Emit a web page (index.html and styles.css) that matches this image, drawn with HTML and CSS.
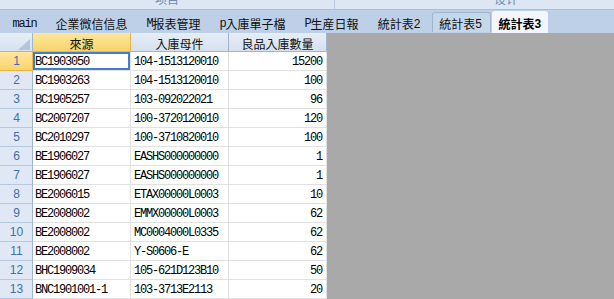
FILE: index.html
```html
<!DOCTYPE html>
<html lang="zh-Hant">
<head>
    <meta charset="UTF-8">
    <title>統計表3</title>
    <link rel="stylesheet" href="styles.css">
</head>
<body>
    <div class="ribbon">
        <div class="ribbon-group left"><span>项目</span></div>
        <div class="ribbon-group right"><span>设计</span></div>
    </div>

    <nav class="tabs">
        <a class="tab"><span class="lat">main</span></a>
        <a class="tab">企業微信信息</a>
        <a class="tab"><span class="lat">M</span>报表管理</a>
        <a class="tab"><span class="lat">p</span>入庫單子檔</a>
        <a class="tab"><span class="lat">P</span>生産日報</a>
        <a class="tab">統計表<span class="num">2</span></a>
        <a class="tab boxed">統計表<span class="num">5</span></a>
        <a class="tab active">統計表<span class="num">3</span></a>
    </nav>

    <main class="workspace">
        <div class="sheet" id="sheet">
            <div class="corner">
                <svg width="12" height="11" viewBox="0 0 12 11"><polygon points="12,0 12,11 0,11" fill="#b4c5d9"/></svg>
            </div>
            <div class="colhead selected">來源</div>
            <div class="colhead">入庫母件</div>
            <div class="colhead">良品入庫數量</div>
        </div>
        <div class="filler"></div>
    </main>

    <script>
        var filas = [
            ["BC1903050", "104-1513120010", "15200"],
            ["BC1903263", "104-1513120010", "100"],
            ["BC1905257", "103-092022021", "96"],
            ["BC2007207", "100-3720120010", "120"],
            ["BC2010297", "100-3710820010", "100"],
            ["BE1906027", "EASHS000000000", "1"],
            ["BE1906027", "EASHS000000000", "1"],
            ["BE2006015", "ETAX00000L0003", "10"],
            ["BE2008002", "EMMX00000L0003", "62"],
            ["BE2008002", "MC0004000L0335", "62"],
            ["BE2008002", "Y-S0606-E", "62"],
            ["BHC1909034", "105-621D123B10", "50"],
            ["BNC1901001-1", "103-3713E2113", "20"]
        ];

        var sheet = document.getElementById("sheet");
        filas.forEach(function (fila, i) {
            var sel = i === 0 ? " selected" : "";
            sheet.innerHTML += `<div class="rowhead${sel}">${i + 1}</div>
                <div class="cell${i === 0 ? " active" : ""}">${fila[0]}</div>
                <div class="cell">${fila[1]}</div>
                <div class="cell num">${fila[2]}</div>`;
        });
    </script>
</body>
</html>
```

FILE: styles.css
```css
body {
    margin: 0;
    padding: 0;
    width: 614px;
    height: 299px;
    overflow: hidden;
    display: flex;
    flex-direction: column;
    font-family: "Noto Sans CJK TC", "Liberation Sans", sans-serif;
    font-size: 12px;
    background-color: #a9a9a9;
}

/* franja superior (grupos de la cinta) */
.ribbon {
    height: 11px;
    display: flex;
    background-color: #dde7f3;
    border-bottom: 1px solid #aabfd9;
    overflow: hidden;
}

.ribbon-group {
    display: flex;
    justify-content: center;
    color: #6f8db6;
}

.ribbon-group span {
    line-height: 12px;
    margin-top: -7px;
}

.ribbon-group.left {
    width: 334px;
    border-right: 1px solid #b8cadf;
}

.ribbon-group.right {
    flex: 1;
    padding-left: 63px;
}

/* pestañas de hojas */
.tabs {
    height: 24px;
    display: flex;
    align-items: stretch;
    padding-left: 3px;
    background-color: #bdd0e7;
}

.tab {
    display: flex;
    align-items: center;
    padding: 4px 9.5px 0;
    color: #111;
    white-space: nowrap;
    box-sizing: border-box;
}

.tab .lat {
    font-family: "Liberation Mono", monospace;
    letter-spacing: -1.2px;
    font-size: 12px;
}

.tab .num {
    font-family: "Liberation Sans", sans-serif;
    font-size: 12px;
}

.tab.boxed {
    margin: 2px 1px 1px 2px;
    padding: 2px 7.5px 0 6.5px;
    background-color: #c7d7ea;
    border: 1px solid #9fb4cf;
    border-bottom: none;
    border-radius: 3px 3px 0 0;
}

.tab.active {
    margin-top: 1px;
    padding: 3px 7px 0 7px;
    background-color: #f3f7fd;
    border-radius: 3px 3px 0 0;
    font-weight: bold;
    color: #000;
}

.tab.active .num {
    font-weight: bold;
}

/* hoja */
.workspace {
    flex: 1;
    display: flex;
    align-items: flex-start;
}

.sheet {
    display: grid;
    grid-template-columns: 33px 98px 98px 98px;
    grid-auto-rows: 19px;
    background-color: #fff;
}

.sheet > div {
    box-sizing: border-box;
    display: flex;
    align-items: center;
    overflow: hidden;
    white-space: nowrap;
}

.corner {
    background: linear-gradient(#e6edf7, #d7e2ef);
    border-right: 1px solid #9eb6ce;
    border-bottom: 1px solid #9eb6ce;
    justify-content: flex-end;
    align-items: flex-end !important;
    padding: 0 2px 1px 0;
}

.colhead {
    justify-content: center;
    padding-top: 2px;
    background: linear-gradient(#e6edf7, #d6e1ef);
    border-right: 1px solid #9eb6ce;
    border-bottom: 1px solid #9eb6ce;
    color: #111;
}

.colhead.selected {
    background: linear-gradient(#fde79b, #f9d46c);
    border-right: 1px solid #f0b442;
    border-bottom: 1px solid #f0b442;
}

.rowhead {
    justify-content: center;
    background-color: #dfe8f4;
    border-right: 1px solid #9eb6ce;
    border-bottom: 1px solid #b7c9de;
    color: #3e6fae;
    font-family: "Liberation Sans", sans-serif;
    font-size: 12px;
    padding-left: 1px;
}

.rowhead.selected {
    background: linear-gradient(#fde79b, #f9d46c);
    border-right: 1px solid #f0b442;
    border-bottom: 1px solid #f0b442;
    color: #3e6fae;
}

.cell {
    padding: 1px 0 0 2px;
    border-right: 1px solid #e1e1e1;
    border-bottom: 1px solid #e1e1e1;
    font-family: "Liberation Mono", monospace;
    font-size: 12px;
    letter-spacing: -1.2px;
    color: #000;
}

.cell:nth-child(4n+3) {
    padding-left: 3px;
}

.cell.num {
    justify-content: flex-end;
    padding-right: 4px;
}

.cell.active {
    box-shadow: inset 0 0 0 2px #3f7ecb;
}

.filler {
    flex: 1;
    align-self: stretch;
    background-color: #a9a9a9;
}
```
